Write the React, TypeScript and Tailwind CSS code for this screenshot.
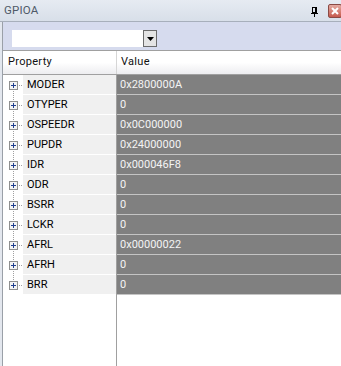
import React from "react";

const rows: [string, string][] = [
  ["MODER", "0x2800000A"],
  ["OTYPER", "0"],
  ["OSPEEDR", "0x0C000000"],
  ["PUPDR", "0x24000000"],
  ["IDR", "0x000046F8"],
  ["ODR", "0"],
  ["BSRR", "0"],
  ["LCKR", "0"],
  ["AFRL", "0x00000022"],
  ["AFRH", "0"],
  ["BRR", "0"],
];

function TreeCell({ first, last }: { first: boolean; last: boolean }) {
  return (
    <svg width="20" height="19" className="shrink-0 block" shapeRendering="crispEdges">
      {!first && <line x1="10.5" y1="0" x2="10.5" y2="6" stroke="#a0a0a0" strokeDasharray="1 1" />}
      {!last && <line x1="10.5" y1="16" x2="10.5" y2="19" stroke="#a0a0a0" strokeDasharray="1 1" />}
      <line x1="16" y1="10.5" x2="20" y2="10.5" stroke="#a0a0a0" strokeDasharray="1 1" />
      <rect x="6.5" y="6.5" width="8" height="8" fill="#f4f4f4" stroke="#8e8f8f" />
      <line x1="8" y1="10.5" x2="13" y2="10.5" stroke="#1f3f8f" />
      <line x1="10.5" y1="8" x2="10.5" y2="13" stroke="#1f3f8f" />
    </svg>
  );
}

export default function App() {
  return (
    <div
      className="w-[341px] h-[366px] bg-white flex flex-col overflow-hidden text-[11px]"
      style={{ fontFamily: "Roboto, 'Liberation Sans', sans-serif" }}
    >
      {/* title bar */}
      <div className="h-[22px] shrink-0 flex items-center bg-gradient-to-b from-[#e6ebf2] to-[#d8dfe9] border-b border-[#a7afbb]">
        <span className="pl-[4px] text-[#4f5a68] text-[11.5px] tracking-[0.2px]">GPIOA</span>
        <div className="flex-1" />
        <svg width="8" height="10" className="mr-[9px] mt-[2px]" shapeRendering="crispEdges">
          <rect x="1.5" y="0.5" width="4" height="5" fill="none" stroke="#000" />
          <line x1="4.5" y1="1" x2="4.5" y2="5" stroke="#000" />
          <line x1="0" y1="6.5" x2="7" y2="6.5" stroke="#000" />
          <line x1="3.5" y1="7" x2="3.5" y2="10" stroke="#000" />
        </svg>
        <div className="w-[14px] h-[14px] mr-[-1px] rounded-[2px] border border-[#8a4a44] bg-gradient-to-b from-[#e3aaa2] to-[#c65a4e] flex items-center justify-center">
          <svg width="8" height="8" viewBox="0 0 8 8">
            <path d="M1 1 L7 7 M7 1 L1 7" stroke="#ffffff" strokeWidth="2" />
          </svg>
        </div>
      </div>

      {/* body */}
      <div className="flex-1 flex bg-[#e3e7ee] pl-[2px]">
        <div className="flex-1 flex flex-col border-l border-[#9aa0a8] bg-white">
          {/* toolbar */}
          <div className="h-[28px] shrink-0 bg-[#d6dbee] flex items-start pl-[9px] pt-[8px]">
            <div className="w-[145px] h-[17px] bg-white flex justify-end">
              <div className="w-[14px] h-[17px] border border-[#6b6b6b] bg-[#e4e4e4] flex items-center justify-center">
                <svg width="7" height="4" viewBox="0 0 7 4">
                  <path d="M0 0 H7 L3.5 4 Z" fill="#000" />
                </svg>
              </div>
            </div>
          </div>

          {/* header */}
          <div className="h-[25px] shrink-0 flex border-t border-b border-[#a0a0a0] bg-gradient-to-b from-white via-white to-[#ededf0]">
            <div className="w-[114px] flex items-center pl-[5px] text-[#111] tracking-[0.3px] border-r border-[#d6d6d6]">
              Property
            </div>
            <div className="flex-1 flex items-center pl-[4px] text-[#111] tracking-[0.3px]">Value</div>
          </div>

          {/* rows */}
          <div className="flex-1 flex">
            <div className="w-[114px] flex flex-col border-r border-[#a0a0a0]">
              {rows.map(([name], i) => (
                <div key={name} className="h-[20px] flex border-b border-white">
                  <TreeCell first={i === 0} last={i === rows.length - 1} />
                  <div className="flex-1 bg-[#f0f0f0] flex items-center pl-[4px] text-[#000] leading-none">
                    {name}
                  </div>
                </div>
              ))}
            </div>
            <div className="flex-1 flex flex-col">
              {rows.map(([name, val]) => (
                <div
                  key={name}
                  className="h-[20px] bg-[#808080] border-b border-[#c4c4c4] flex items-center pl-[3px] text-[#f4f4f4] leading-none"
                >
                  {val}
                </div>
              ))}
            </div>
          </div>
        </div>
      </div>
    </div>
  );
}
